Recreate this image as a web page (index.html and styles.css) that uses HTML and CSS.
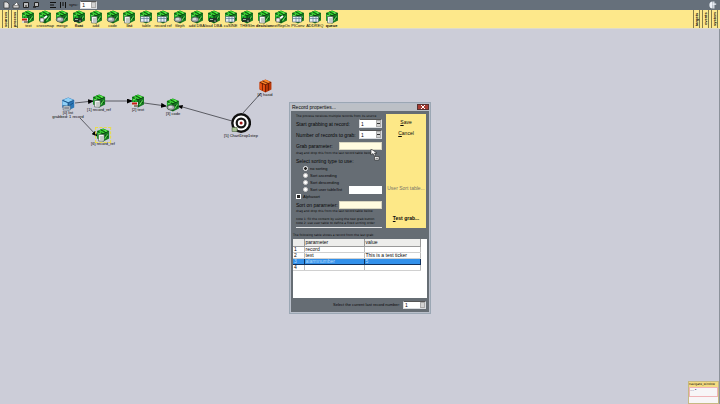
FILE: index.html
```html
<!DOCTYPE html>
<html lang="en">
<head>
<meta charset="utf-8">
<title>Record properties</title>
<link rel="stylesheet" href="styles.css">
</head>
<body>
<svg class="defs" aria-hidden="true">
  <symbol id="green" viewBox="0 0 14 14">
    <path fill="#167a22" d="M7 .5 13 3v7.500L7 13.500 1 10.500V3z"/>
    <path fill="#35d52f" d="M7 .8 12.500 3.200 7 5.500 1.500 3.200z"/>
    <path fill="#1fae2c" d="M1.300 4 6.500 6v6.500L1.300 10z"/>
    <path stroke="#083c0d" stroke-width=".9" fill="none" d="M1.500 3.300 7 5.700 12.500 3.300M7 5.700V13M3 7.500l3 2M9 7l3 2M4.500 1.800l5 2.500"/>
    <path stroke="#7df065" stroke-width=".9" fill="none" d="M2 6l3-1.500M8.500 2.500l2 .8M8.500 11l3-4.500"/>
  </symbol>
  <symbol id="blue" viewBox="0 0 14 14">
    <path fill="#2c78b8" d="M7 .5 13 3v7.500L7 13.500 1 10.500V3z"/>
    <path fill="#8fd0f7" d="M7 .8 12.500 3.200 7 5.500 1.500 3.200zM1.300 4 6.500 6v3L1.300 8z"/>
    <path stroke="#174a7c" stroke-width=".8" fill="none" d="M1.500 3.300 7 5.700 12.500 3.300M7 5.700V13M9 8l3-2"/>
    <path fill="#d5dce2" stroke="#555f69" stroke-width=".6" d="M2 9h7v4H2z"/><path stroke="#445" d="M3 11h5"/>
  </symbol>
  <symbol id="orange" viewBox="0 0 14 14">
    <path fill="#ba3708" d="M7 .5 13 3v7.500L7 13.500 1 10.500V3z"/>
    <path fill="#ff8a2c" d="M7 .8 12.500 3.200 7 5.500 1.500 3.200z"/>
    <path fill="#e95313" d="M1.300 4 6.500 6v6.500L1.300 10z"/>
    <path stroke="#5a1703" stroke-width=".8" fill="none" d="M1.500 3.300 7 5.700 12.500 3.300M7 5.700V13M4 4.500v7M10 4.500v7M4 2l6 2.500"/>
  </symbol>
  <symbol id="m-red" viewBox="0 0 14 14"><path fill="#d8ded4" d="M1 8h6v5H1z"/><path stroke="#c91c12" stroke-width="2" d="M1 9.500h5"/><path stroke="#421" d="M3 12h4"/></symbol>
  <symbol id="m-arrow" viewBox="0 0 14 14"><path stroke="#fff" stroke-width="2" d="m3 11 6-5"/><path fill="#eee" stroke="#333" stroke-width=".6" d="M2 8h4v4H2z"/></symbol>
  <symbol id="m-page" viewBox="0 0 14 14"><path fill="#f2f5f2" stroke="#44504a" stroke-width=".6" d="M2.500 6.500h5.500v6.500H2.500z"/><path stroke="#707a78" stroke-width=".7" d="M4 9h3M4 11h3"/></symbol>
  <symbol id="m-grid" viewBox="0 0 14 14"><path fill="#e6eef2" stroke="#4a5962" stroke-width=".6" d="M1.500 6.500h9v5.500h-9z"/><path stroke="#5a7a9a" stroke-width=".7" d="M2 8.500h8M5 7v5M8 7v5"/></symbol>
  <symbol id="m-disk" viewBox="0 0 14 14"><ellipse cx="5" cy="9.500" rx="3.700" ry="2.600" fill="#a9b1b1" stroke="#3e4744" stroke-width=".7"/><path stroke="#fff" d="M3 9h3"/></symbol>
  <symbol id="m-dark" viewBox="0 0 14 14"><path fill="#20382a" d="M2 8h8v4H2z"/><path stroke="#c4d0c4" stroke-width=".8" d="M3 9.500h3M7 11h2"/></symbol>
  <symbol id="target" viewBox="0 0 20 20">
    <circle cx="10" cy="10" r="10" fill="#101010"/><circle cx="10" cy="10" r="7.600" fill="#fff"/><circle cx="10" cy="10" r="5.500" fill="#151515"/><circle cx="10" cy="10" r="3.300" fill="#fff"/><circle cx="10" cy="10" r="1.500" fill="#a01818"/>
    <path fill="#a9c194" stroke="#48603b" stroke-width=".6" d="M1 14.500h5v4H1z"/>
  </symbol>
</svg>

<header class="menubar">
  <button class="tool" aria-label="New"><svg viewBox="0 0 8 8"><path d="M2 1h3l2 2v4H2z" fill="#ddd" stroke="#333" stroke-width=".7"/></svg></button>
  <button class="tool" aria-label="Open"><svg viewBox="0 0 8 8"><path d="M1 4h6v3H1z" fill="#ccc" stroke="#333" stroke-width=".7"/><path d="m2 4 3-3 1 3" fill="#fff" stroke="#444" stroke-width=".6"/></svg></button>
  <button class="tool" aria-label="Save"><svg viewBox="0 0 8 8"><path d="M1.500 1.500h5v5h-5z" fill="#bbb" stroke="#222"/><path d="M3 5h2" stroke="#222"/></svg></button>
  <button class="tool" aria-label="Save as"><svg viewBox="0 0 8 8"><path d="M2.500 1.500h4v4h-4z" fill="#bbb" stroke="#222"/><path d="M1 6h3" stroke="#222" stroke-width="1.500"/></svg></button>
  <button class="tool lines" aria-label="Align rows"><svg viewBox="0 0 8 8"><path d="M1 1.500h6M1 4h4M1 6.500h6" stroke="#111"/></svg></button>
  <button class="tool" aria-label="Align columns"><svg viewBox="0 0 8 8"><path d="M1.500 1v6M4 1v4M6.500 1v6" stroke="#111"/></svg></button>
  <label class="sync" for="sync">sync:</label>
  <span class="spin"><input id="sync" value="1"><i></i></span>
  <svg class="brand" viewBox="0 0 10 10"><path d="M4.500.5a4 4.500 0 0 0 0 9z" fill="#eef3fa"/><path d="M6 .5v9M4.500 4h4.500" stroke="#eef3fa" stroke-width="1.500"/></svg>
</header>

<nav class="palette">
  <div class="tabs"><button>sources</button><button>process</button></div>
  <ul class="items">
    <li><svg><use href="#green"/><use href="#m-red"/></svg>text</li>
    <li><svg><use href="#green"/><use href="#m-arrow"/></svg>crossmap</li>
    <li><svg><use href="#green"/><use href="#m-disk"/></svg>merge</li>
    <li class="on"><svg><use href="#green"/><use href="#m-dark"/></svg>float</li>
    <li><svg><use href="#green"/><use href="#m-page"/></svg>add</li>
    <li><svg><use href="#green"/><use href="#m-disk"/></svg>code</li>
    <li class="on"><svg><use href="#green"/><use href="#m-page"/></svg>list</li>
    <li><svg><use href="#green"/><use href="#m-grid"/></svg>table</li>
    <li><svg><use href="#green"/><use href="#m-grid"/></svg>record ref</li>
    <li><svg><use href="#green"/><use href="#m-disk"/></svg>fileph</li>
    <li><svg><use href="#green"/><use href="#m-disk"/></svg>add DBA</li>
    <li><svg><use href="#green"/><use href="#m-dark"/></svg>load DBA</li>
    <li><svg><use href="#green"/><use href="#m-grid"/></svg>cuSINE</li>
    <li><svg><use href="#green"/><use href="#m-dark"/></svg>THESIm</li>
    <li class="on"><svg><use href="#green"/><use href="#m-page"/></svg>decision</li>
    <li><svg><use href="#green"/><use href="#m-arrow"/></svg>extRepOn</li>
    <li><svg><use href="#green"/><use href="#m-grid"/></svg>PIConv</li>
    <li><svg><use href="#green"/><use href="#m-grid"/></svg>ADDREQ</li>
    <li class="on"><svg><use href="#green"/><use href="#m-page"/></svg>queue</li>
  </ul>
  <div class="tabs right"><button>targets</button><button>events</button><button>system</button></div>
</nav>

<main class="canvas">
  <svg class="wires" viewBox="0 29 300 140">
    <defs><marker id="tip" markerWidth="6" markerHeight="5" refX="5" refY="2.500" orient="auto" markerUnits="userSpaceOnUse"><path d="M0 0 6 2.500 0 5z"/></marker></defs>
    <g stroke="#3c3e44" stroke-width=".8" fill="none" marker-end="url(#tip)">
      <path marker-end="url(#tip)" d="M75 103 93 101"/><path marker-end="url(#tip)" d="M105 101H132"/><path marker-end="url(#tip)" d="M144 103 166 106"/><path marker-end="url(#tip)" d="M80 118 97 136"/>
    </g>
    <path d="M179 106 232 121M243 113l18-20" stroke="#3c3e44" stroke-width=".8"/><path d="m177 106 6-1-1 4z"/>
  </svg>
  <figure class="node n1"><svg><use href="#blue"/></svg><figcaption>[0] list<br>grabbed: 1 record</figcaption></figure>
  <figure class="node n2"><svg><use href="#green"/><use href="#m-page"/></svg><figcaption>[1] record_ref</figcaption></figure>
  <figure class="node n3"><svg><use href="#green"/><use href="#m-red"/></svg><figcaption>[2] text</figcaption></figure>
  <figure class="node n4"><svg><use href="#green"/><use href="#m-disk"/></svg><figcaption>[3] code</figcaption></figure>
  <figure class="node n5 chosen"><svg><use href="#green"/><use href="#m-page"/></svg><figcaption>[6] record_ref</figcaption></figure>
  <figure class="node n6 big"><svg><use href="#target"/></svg><figcaption>[5] ChartDrop1step</figcaption></figure>
  <figure class="node n7"><svg><use href="#orange"/></svg><figcaption>[4] hasid</figcaption></figure>

  <section class="dialog" role="dialog" aria-labelledby="dt">
    <div class="titlebar"><h1 id="dt">Record properties...</h1><button class="close" aria-label="Close"><svg viewBox="0 0 4 4"><path d="m0 0 4 4M4 0 0 4" stroke="#fff"/></svg></button></div>
    <div class="body">
      <div class="top">
        <form class="form">
          <p class="hint">The process receives multiple records from its source</p>
          <div class="row"><label for="a">Start grabbing at record:</label><span class="spin"><input id="a" value="1"><i></i></span></div>
          <div class="row"><label for="b">Number of records to grab:</label><span class="spin"><input id="b" value="1"><i></i></span></div>
          <div class="row"><label for="c">Grab parameter:</label><input id="c" class="drop"></div>
          <p class="hint">drag and drop this from the last record table below</p>
          <p class="lead">Select sorting type to use:</p>
          <label class="opt"><input type="radio" name="s" checked>no sorting</label>
          <label class="opt"><input type="radio" name="s">Sort ascending</label>
          <label class="opt"><input type="radio" name="s">Sort descending</label>
          <div class="opt-row"><label class="opt"><input type="radio" name="s">Sort user table/list</label><input class="table-name" aria-label="Table name"></div>
          <label class="opt check"><input type="checkbox" checked>Alphasort</label>
          <div class="row sort"><label for="d">Sort on parameter:</label><input id="d" class="drop"></div>
          <p class="hint">drag and drop this from the last record table below</p>
          <p class="hint notes">note 1: fill the content by using the test grab button<br>note 2: use user table to define a fixed sorting order</p>
        </form>
        <div class="actions">
          <button><u>S</u>ave</button><button><u>C</u>ancel</button><button class="off">User Sort table...</button><button class="strong"><u>T</u>est grab...</button>
        </div>
      </div>
      <p class="hint caption">The following table shows a record from the last grab:</p>
      <div class="sheet">
        <table>
          <colgroup><col class="c0"><col class="c1"><col class="c2"></colgroup>
          <thead><tr><th></th><th>parameter</th><th>value</th></tr></thead>
          <tbody>
            <tr><td>1</td><td>record</td><td></td></tr>
            <tr><td>2</td><td>text</td><td>This is a test ticker</td></tr>
            <tr class="sel"><td>3</td><td>alarmnumber</td><td>5</td></tr>
            <tr><td>4</td><td></td><td></td></tr>
          </tbody>
        </table>
      </div>
      <div class="foot"><label for="e">Select the current last record number:</label><span class="spin"><input id="e" value="1"><i></i></span></div>
    </div>
  </section>
  <svg class="pointer" viewBox="0 0 10 12"><path d="M1 0v6l2-1.500L4.500 7l1-.5L4.500 4H7z" fill="#fff" stroke="#222" stroke-width=".6"/><path d="M4.500 7.500H9V11H4.500z" fill="#fff" stroke="#333" stroke-width=".7"/><path d="M5.500 9.300H8" stroke="#333" stroke-width=".7"/></svg>
  <aside class="mini"><h2>navigate_window</h2><div><span>--- ▪</span></div></aside>
</main>
</body>
</html>
```
FILE: styles.css
```css
* { box-sizing: border-box; }
body { margin: 0; min-height: 100vh; display: flex; flex-direction: column; background: #cccdd8; color: #080808; font: 5px/6px "Liberation Sans", sans-serif; overflow: hidden; }
button, input { font: inherit; color: inherit; margin: 0; padding: 0; border: 0; background: none; }
p, h1, h2, ul, figure { margin: 0; padding: 0; font: inherit; }
.defs { position: absolute; width: 0; height: 0; }

.menubar { display: flex; align-items: center; height: 10px; padding: 0 2px; background: #66707b; }
.tool { width: 8px; height: 8px; margin-right: 2px; }
.tool svg, .brand { display: block; width: 8px; height: 8px; }
.tool.lines { margin-left: 7px; }
.brand { margin-left: auto; width: 10px; }
.sync { margin-right: 2px; font-size: 4px; }
.spin { display: flex; width: 17px; height: 8px; background: #fff; border: 1px solid #d9dce0; border-top-color: #555; }
.spin input { flex: 1; min-width: 0; padding-left: 1px; outline: 0; }
.spin i { width: 5px; background: linear-gradient(#d2d2d2 40%, #333 40% 60%, #d2d2d2 60%); border: 1px solid #aaa; }

.palette { display: flex; align-items: stretch; height: 19px; background: #fde88b; border-bottom: 1px solid #dedbc9; }
.tabs { display: flex; gap: 2px; padding: 0 2px; }
.tabs button { width: 7px; writing-mode: vertical-rl; transform: rotate(180deg); border: solid #857b4b; border-width: 0 1px; font-size: 4px; font-weight: bold; line-height: 5px; text-align: center; }
.tabs.right { margin-left: auto; }
.items { display: grid; grid-template-columns: repeat(19, 1fr); width: 320px; list-style: none; }
.items li { display: flex; flex-direction: column; align-items: center; font-size: 4px; line-height: 4px; white-space: nowrap; min-width: 0; }
.items svg { width: 14px; height: 14px; flex: none; }
.items .on { font-weight: bold; }

.canvas { flex: 1; position: relative; border-right: 1px solid #8c929b; }
.wires { position: absolute; left: 0; top: 0; width: 300px; height: 140px; }
.node { position: absolute; transform: translateX(-50%); text-align: center; font-size: 4px; line-height: 4px; white-space: nowrap; }
.node svg { display: block; width: 14px; height: 14px; margin: 0 auto; }
.big svg { width: 20px; height: 20px; }
.big figcaption { padding-top: 1px; }
.chosen svg { outline: 1px dashed #e8dc4c; }
.n1 { left: 68px; top: 68px; }
.n2 { left: 99px; top: 65px; }
.n3 { left: 138px; top: 65px; }
.n4 { left: 173px; top: 69px; }
.n5 { left: 103px; top: 99px; }
.n6 { left: 241px; top: 84px; }
.n7 { left: 265px; top: 50px; }

.dialog { position: absolute; left: 289px; top: 73px; width: 142px; padding: 0 2px 2px; background: #666d74; border: 1px solid #9ba7b4; outline: 1px solid #b9bfca; outline-offset: -2px; }
.titlebar { display: flex; align-items: center; justify-content: space-between; height: 8px; margin: 0 -2px; padding: 0 1px 0 2px; background: #bcc0c6; }
.close { display: grid; place-items: center; width: 12px; height: 6px; background: #a73c33; border: 1px solid #58302f; }
.close svg { width: 4px; height: 4px; }
.body { padding: 3px 1px 0; }
.top { display: flex; gap: 4px; padding: 0 1px 0 3px; }
.form { flex: 1; min-width: 0; padding-bottom: 2px; border-bottom: 1px solid #e4e6e8; }
.hint { font: 3px/4px "DejaVu Sans", sans-serif; white-space: nowrap; }
.row { display: flex; align-items: center; justify-content: space-between; height: 11px; white-space: nowrap; }
.row .spin { width: 23px; height: 9px; flex: none; }
.drop { width: 43px; height: 8px; background: #fffbe0; border: 1px solid #d8d5c0; }
.lead { padding: 3px 0 1px; }
.opt { display: flex; align-items: center; gap: 2px; height: 7px; padding-left: 7px; font-size: 4px; white-space: nowrap; }
.opt input { appearance: none; width: 5px; height: 5px; background: #fff; border: 1px solid #ccc; border-radius: 50%; }
.opt input:checked { background: #222; border-color: #fff; }
.opt-row { display: flex; justify-content: space-between; align-items: center; height: 7px; }
.table-name { width: 33px; height: 8px; background: #fff; flex: none; }
.opt.check { padding: 0; }
.opt.check input { border-radius: 0; }
.row.sort { height: 9px; }
.notes { padding-top: 4px; }
.actions { display: flex; flex-direction: column; align-items: center; width: 40px; flex: none; background: #fde887; padding: 5px 0 7px; }
.actions button { height: 6px; line-height: 6px; margin-bottom: 5px; white-space: nowrap; }
.actions .off { color: #77756a; margin-top: auto; margin-bottom: 24px; }
.actions .strong { font-weight: bold; margin-bottom: 0; }
.caption { padding: 5px 0 2px; }
.sheet { height: 59px; background: #fff; }
table { width: 128px; table-layout: fixed; border-collapse: collapse; }
.c0 { width: 11px; }
.c1 { width: 60px; }
th, td { height: 6px; padding: 0 1px; line-height: 5px; font-weight: normal; text-align: left; border-right: 1px solid #bbb; border-bottom: 1px solid #d0d0d0; white-space: nowrap; }
th { height: 7px; background: #ededeb; border-color: #999; }
.sel td { background: #3290ea; border-color: #10305c; border-top: 1px solid #10305c; color: #b9dcfb; }
.foot { display: flex; justify-content: flex-end; align-items: center; gap: 3px; height: 13px; padding-right: 1px; font-size: 4px; }
.foot .spin { width: 23px; height: 8px; font-size: 5px; }
.pointer { position: absolute; left: 370px; top: 120px; width: 10px; height: 12px; }
.mini { position: absolute; right: 0; bottom: 0; width: 31px; height: 23px; background: #f7f5f7; border: 1px solid #c6b983; font-size: 4px; }
.mini h2 { font: 3px/5px "DejaVu Sans", sans-serif; background: #f5dc82; white-space: nowrap; }
.mini div { height: 10px; border: 1px solid #f0b4b8; line-height: 4px; color: #447; }
```
